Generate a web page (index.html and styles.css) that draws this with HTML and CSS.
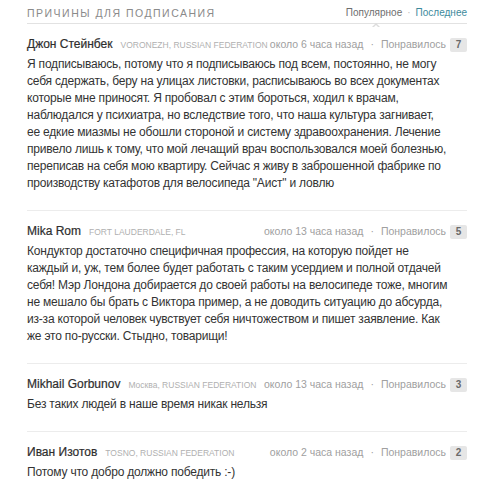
FILE: index.html
```html
<!DOCTYPE html>
<html lang="ru">
<head>
<meta charset="utf-8">
<link rel="stylesheet" href="styles.css">
</head>
<body>
<div class="wrap">
  <div class="head">
    <div class="title">Причины для подписания</div>
    <div class="tabs">
      <span class="tab active">Популярное</span>
      <span class="sep">·</span>
      <span class="tab link">Последнее</span>
    </div>
  </div>

  <div class="comment">
    <div class="meta">
      <span class="name">Джон Стейнбек</span>
      <span class="loc">VORONEZH, RUSSIAN FEDERATION</span>
      <span class="time">около 6 часа назад</span>
      <span class="dot">·</span>
      <span class="like">Понравилось</span>
      <span class="badge">7</span>
    </div>
    <p class="text">Я подписываюсь, потому что я подписываюсь под всем, постоянно, не могу себя сдержать, беру на улицах листовки, расписываюсь во всех документах которые мне приносят. Я пробовал с этим бороться, ходил к врачам, наблюдался у психиатра, но вследствие того, что наша культура загнивает, ее едкие миазмы не обошли стороной и систему здравоохранения. Лечение привело лишь к тому, что мой лечащий врач воспользовался моей болезнью, переписав на себя мою квартиру. Сейчас я живу в заброшенной фабрике по производству катафотов для велосипеда "Аист" и ловлю</p>
  </div>

  <div class="comment">
    <div class="meta">
      <span class="name">Mika Rom</span>
      <span class="loc">FORT LAUDERDALE, FL</span>
      <span class="time">около 13 часа назад</span>
      <span class="dot">·</span>
      <span class="like">Понравилось</span>
      <span class="badge">5</span>
    </div>
    <p class="text">Кондуктор достаточно специфичная профессия, на которую пойдет не каждый и, уж, тем более будет работать с таким усердием и полной отдачей себя! Мэр Лондона добирается до своей работы на велосипеде тоже, многим не мешало бы брать с Виктора пример, а не доводить ситуацию до абсурда, из-за которой человек чувствует себя ничтожеством и пишет заявление. Как же это по-русски. Стыдно, товарищи!</p>
  </div>

  <div class="comment">
    <div class="meta">
      <span class="name">Mikhail Gorbunov</span>
      <span class="loc">Москва, RUSSIAN FEDERATION</span>
      <span class="time">около 13 часа назад</span>
      <span class="dot">·</span>
      <span class="like">Понравилось</span>
      <span class="badge">3</span>
    </div>
    <p class="text">Без таких людей в наше время никак нельзя</p>
  </div>

  <div class="comment">
    <div class="meta">
      <span class="name">Иван Изотов</span>
      <span class="loc">TOSNO, RUSSIAN FEDERATION</span>
      <span class="time">около 2 часа назад</span>
      <span class="dot">·</span>
      <span class="like">Понравилось</span>
      <span class="badge">2</span>
    </div>
    <p class="text">Потому что добро должно победить :-)</p>
  </div>
</div>
</body>
</html>
```

FILE: styles.css
```css
html, body {
  margin: 0;
  padding: 0;
  background: #fff;
}
body {
  font-family: "Liberation Sans", Arial, sans-serif;
  color: #333;
}
.wrap {
  width: 440px;
  margin-left: 27px;
}
.head {
  display: flex;
  justify-content: space-between;
  align-items: center;
  padding: 5px 0 2px;
  border-bottom: 1px solid #e2e2e2;
  position: relative;
}
.title {
  font-size: 10.5px;
  line-height: 16px;
  letter-spacing: 1.5px;
  text-transform: uppercase;
  color: #8a8a8a;
}
.tabs {
  font-size: 10px;
  line-height: 16px;
  display: flex;
  gap: 5px;
}
.tab.active {
  color: #6e6e6e;
  position: relative;
}
.tab.active::before {
  content: "";
  position: absolute;
  left: 26px;
  bottom: -6px;
  border-left: 4px solid transparent;
  border-right: 4px solid transparent;
  border-bottom: 4px solid #dcdcdc;
}
.tab.active::after {
  content: "";
  position: absolute;
  left: 27px;
  bottom: -7px;
  border-left: 3px solid transparent;
  border-right: 3px solid transparent;
  border-bottom: 3px solid #fff;
}
.sep {
  color: #bbb;
}
.tab.link {
  color: #3d8a9c;
}
.comment {
  padding: 12px 0 18px;
  border-bottom: 1px solid #ececec;
}
.comment:last-child {
  border-bottom: none;
}
.meta {
  display: flex;
  align-items: baseline;
  line-height: 17px;
  white-space: nowrap;
}
.name {
  font-size: 12px;
  color: #2e2e2e;
  -webkit-text-stroke: 0.2px #2e2e2e;
}
.loc {
  font-size: 8.5px;
  color: #b0b0b0;
  margin-left: 8px;
  flex: 1;
  min-width: 0;
}
.time, .like {
  font-size: 10.5px;
  color: #a0a0a0;
}
.dot {
  font-size: 10.5px;
  color: #a0a0a0;
  margin: 0 7px;
}
.badge {
  font-size: 10px;
  font-weight: bold;
  color: #6a6a6a;
  background: #e6e6e6;
  border-radius: 2px;
  width: 17px;
  text-align: center;
  line-height: 14px;
  margin-left: 4px;
  align-self: center;
}
.text {
  margin: 2px 0 0;
  width: 421px;
  font-size: 12px;
  letter-spacing: -0.2px;
  line-height: 17px;
  color: #333;
}
```
